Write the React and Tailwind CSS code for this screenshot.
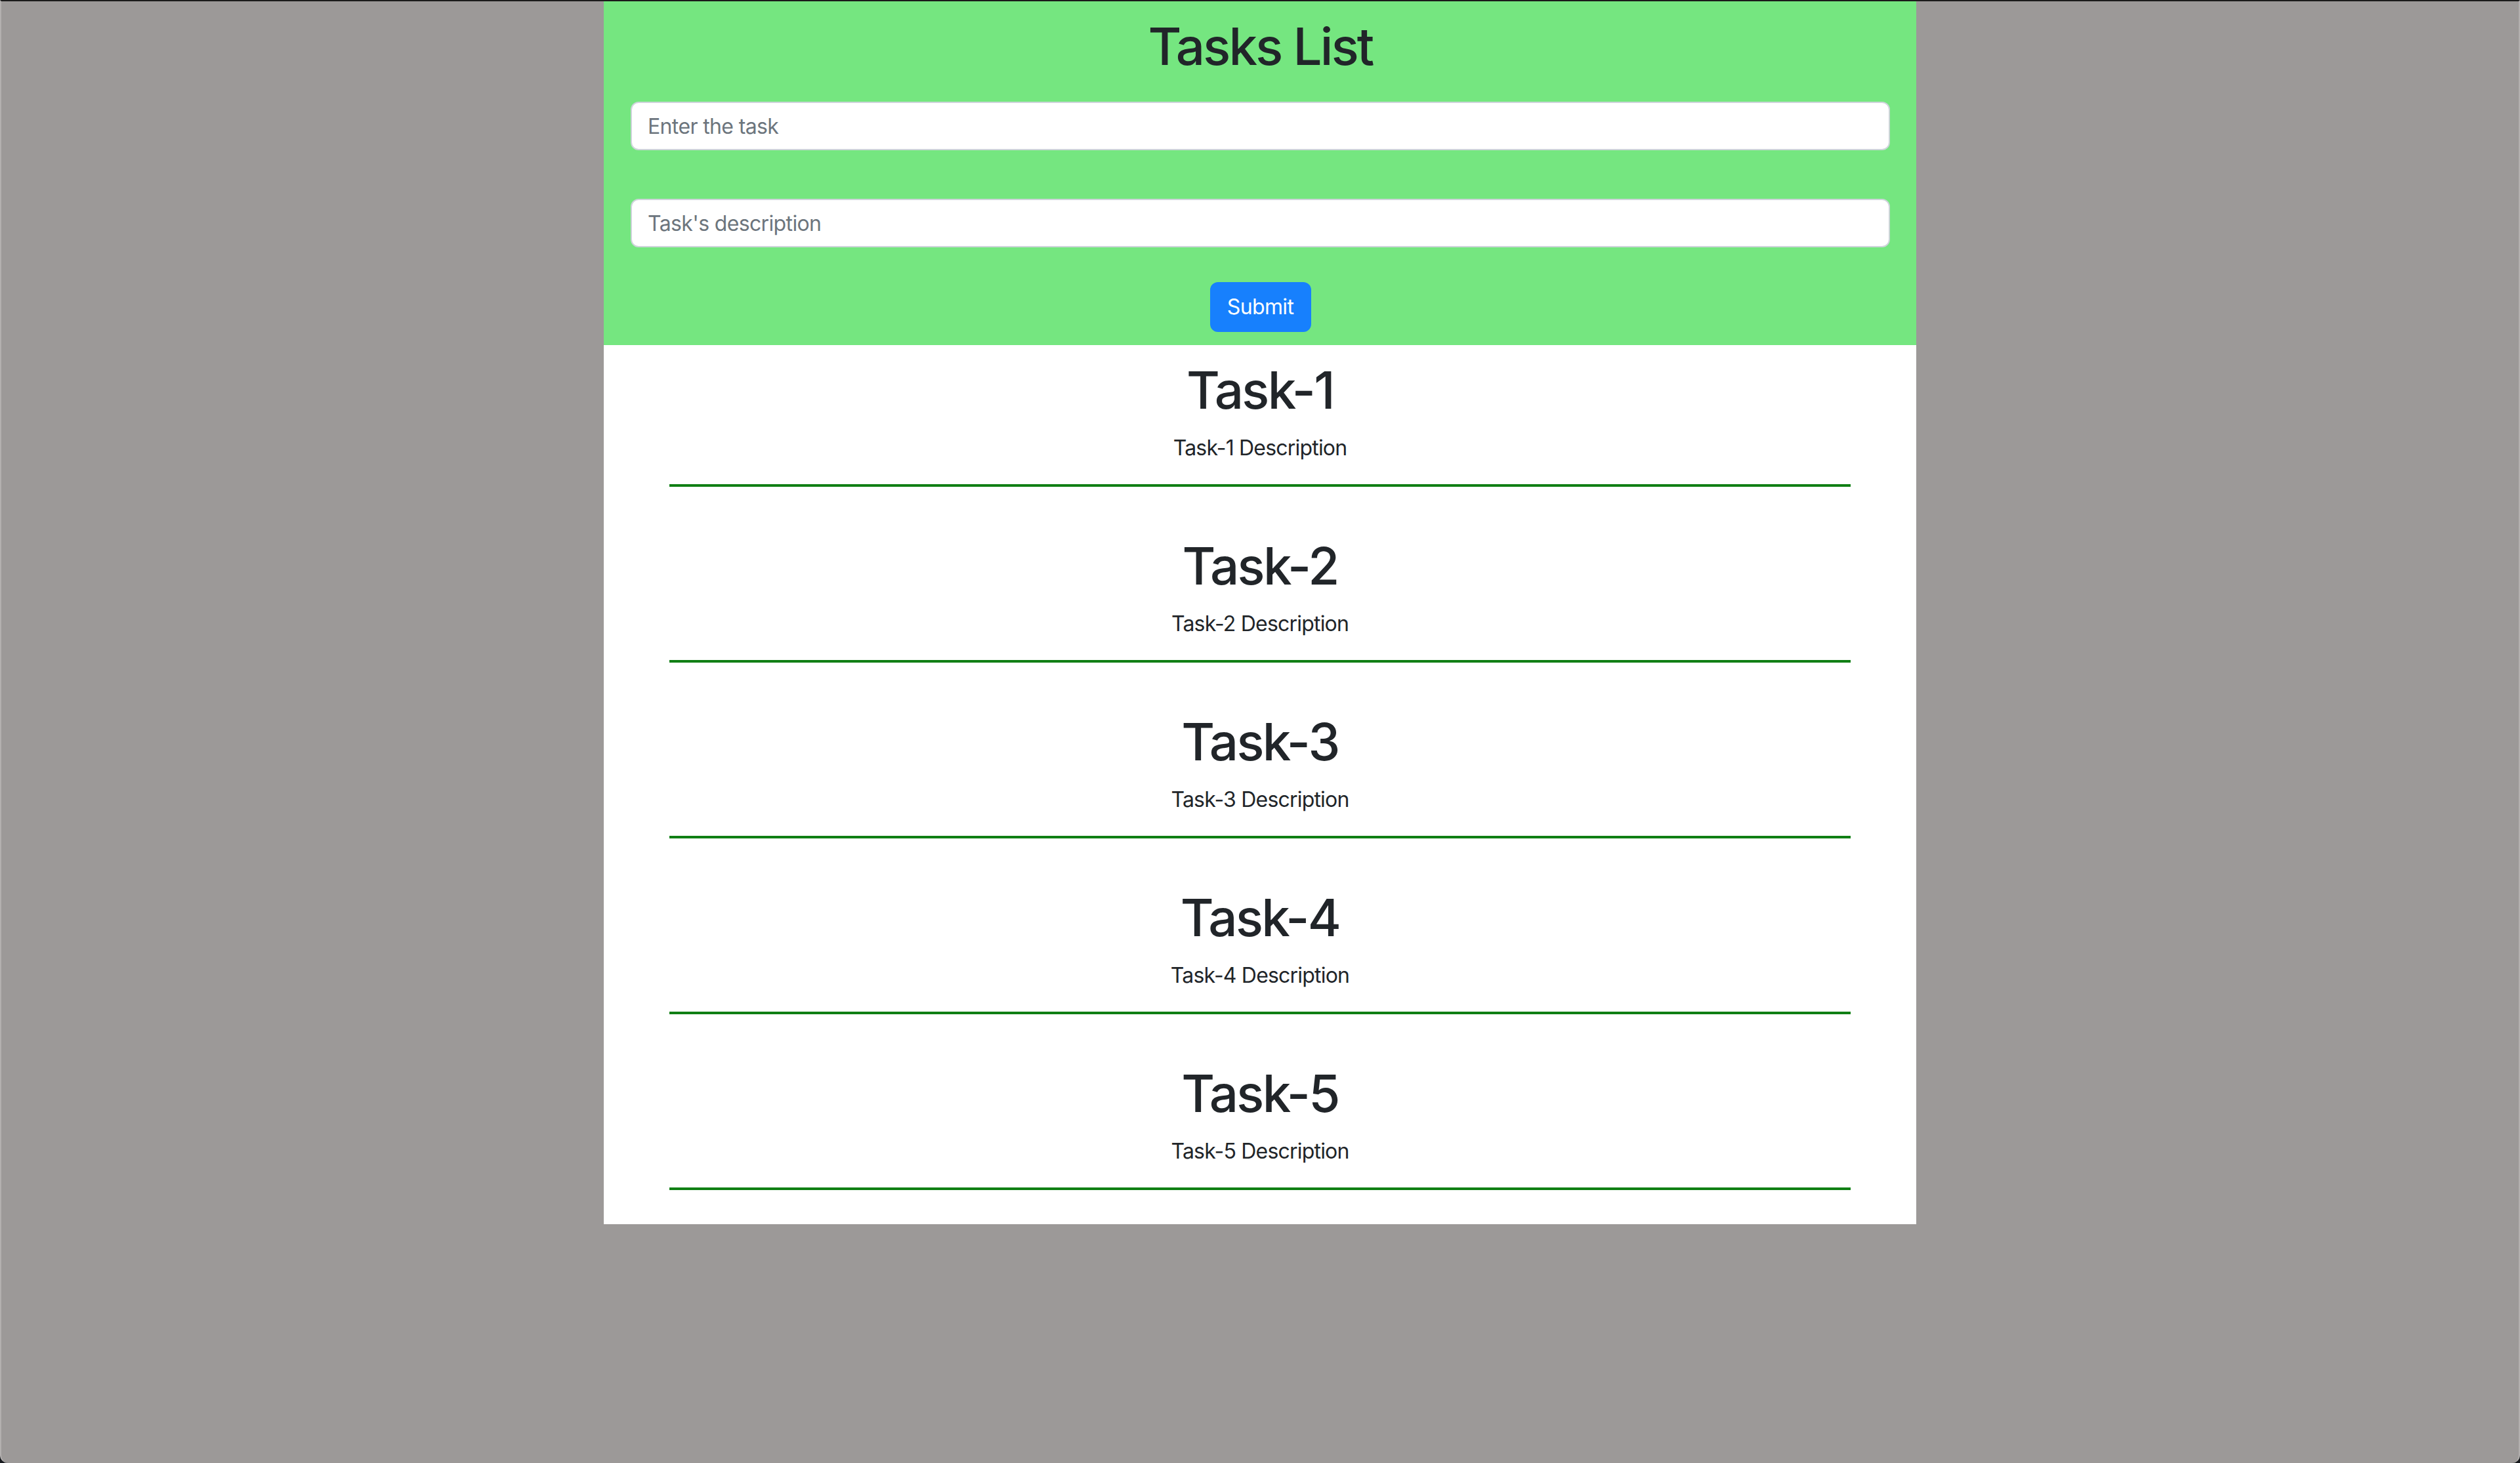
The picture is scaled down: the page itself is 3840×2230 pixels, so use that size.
import React, { useState } from 'react';

const initialTasks = [1, 2, 3, 4, 5].map((n) => ({
  title: `Task-${n}`,
  description: `Task-${n} Description`,
}));

const TaskItem = ({ task }) => (
  <div className="flex flex-col items-center pt-[22px] pb-[52px]">
    <h2 className="text-[78px] leading-[94px] font-medium tracking-[-0.034em] text-[#212529]">{task.title}</h2>
    <p className="mt-[17px] text-[32px] leading-[48px] tracking-[-0.025em] text-[#212529]">{task.description}</p>
    <div className="mt-[31px] h-[4px] w-[90%] bg-[#107f14]" />
  </div>
);

const App = () => {
  const [tasks] = useState(initialTasks);
  const [title, setTitle] = useState('');
  const [description, setDescription] = useState('');

  return (
    <div
      className="h-[2230px] w-full bg-[#15181c]"
      style={{ fontFamily: 'Inter, "Noto Sans", sans-serif' }}
    >
      <div className="h-full border-t-2 border-t-[#1b1b1b] border-x-2 border-x-[#b3b0af] bg-[#9c9998] rounded-b-[12px]">
        <div className="mx-auto w-[2000px]">
          <div className="bg-[#75e680] pt-[22px] pb-[20px] pl-[41px] pr-[40px] flex flex-col items-center">
            <h1 className="text-[78px] leading-[94px] font-medium tracking-[-0.036em] text-[#212529]">Tasks List</h1>
            <input
              className="mt-[37px] w-full h-[74px] rounded-[12px] border-2 border-[#ced4da] bg-white px-[24px] text-[32px] tracking-[-0.02em] text-[#212529] placeholder:text-[#6c757d] outline-none"
              placeholder="Enter the task"
              value={title}
              onChange={(e) => setTitle(e.target.value)}
            />
            <input
              className="mt-[74px] w-full h-[74px] rounded-[12px] border-2 border-[#ced4da] bg-white px-[24px] text-[32px] tracking-[-0.02em] text-[#212529] placeholder:text-[#6c757d] outline-none"
              placeholder="Task's description"
              value={description}
              onChange={(e) => setDescription(e.target.value)}
            />
            <button className="mt-[53px] w-[154px] h-[76px] rounded-[12px] bg-[#1780fd] text-[32px] tracking-[-0.02em] text-white">
              Submit
            </button>
          </div>
          <div className="bg-white">
            {tasks.map((task) => (
              <TaskItem key={task.title} task={task} />
            ))}
          </div>
        </div>
      </div>
    </div>
  );
};

export default App;
